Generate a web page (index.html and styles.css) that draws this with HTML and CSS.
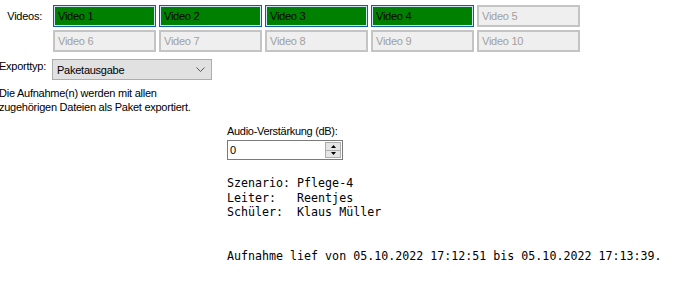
FILE: index.html
```html
<!DOCTYPE html>
<html lang="de">
<head>
    <meta charset="UTF-8">
    <title>Export</title>
    <link rel="stylesheet" href="styles.css">
</head>
<body>

<!-- Video selection -->
<div class="video-row">
    <div class="label videos-label">Videos:</div>
    <div class="video-grid">
        <div class="video-btn selected">Video 1</div>
        <div class="video-btn selected">Video 2</div>
        <div class="video-btn selected">Video 3</div>
        <div class="video-btn selected">Video 4</div>
        <div class="video-btn">Video 5</div>
        <div class="video-btn">Video 6</div>
        <div class="video-btn">Video 7</div>
        <div class="video-btn">Video 8</div>
        <div class="video-btn">Video 9</div>
        <div class="video-btn">Video 10</div>
    </div>
</div>

<!-- Export type -->
<div class="export-row">
    <div class="label export-label">Exporttyp:</div>
    <div class="combo">
        <span>Paketausgabe</span>
        <svg class="chevron" width="9" height="5" viewBox="0 0 9 5">
            <polyline points="0.5,0.5 4.5,4.5 8.5,0.5" fill="none" stroke="#555" stroke-width="1"/>
        </svg>
    </div>
</div>

<div class="desc">
    Die Aufnahme(n) werden mit allen<br>
    zugehörigen Dateien als Paket exportiert.
</div>

<!-- Details -->
<div class="details">
    <div class="label audio-label">Audio-Verstärkung (dB):</div>
    <div class="spin">
        <span class="spin-value">0</span>
        <div class="spin-buttons">
            <div class="spin-up"><svg width="5" height="3" viewBox="0 0 5 3"><polygon points="2.5,0 5,3 0,3" fill="#000"/></svg></div>
            <div class="spin-down"><svg width="5" height="3" viewBox="0 0 5 3"><polygon points="0,0 5,0 2.5,3" fill="#000"/></svg></div>
        </div>
    </div>
<pre class="info">Szenario: Pflege-4
Leiter:   Reentjes
Schüler:  Klaus Müller


Aufnahme lief von 05.10.2022 17:12:51 bis 05.10.2022 17:13:39.</pre>
</div>

</body>
</html>
```

FILE: styles.css
```css
body {
    margin: 0;
    padding: 0;
    background-color: #ffffff;
    font-family: 'Liberation Sans', Arial, sans-serif;
    font-size: 11px;
    letter-spacing: -0.25px;
    color: #000000;
}

.label {
    line-height: 13px;
}

.video-row {
    display: flex;
    padding-top: 5px;
}

.videos-label {
    width: 42px;
    text-align: right;
    padding-top: 5px;
    margin-right: 11px;
}

.video-grid {
    display: grid;
    grid-template-columns: repeat(5, 103px);
    grid-auto-rows: 22px;
    column-gap: 3px;
    row-gap: 3px;
}

.video-btn {
    box-sizing: border-box;
    border: 2px solid #c4c4c4;
    background-color: #efefef;
    color: #a0a0a0;
    padding: 2px 0 0 3px;
    line-height: 14px;
}

.video-btn.selected {
    border: 1px solid #0a5fa8;
    box-shadow: inset 0 0 0 1px #cfe4f5;
    background-color: #008000;
    color: #000000;
    padding: 3px 0 0 4px;
}

.export-row {
    display: flex;
    margin-top: 6px;
}

.export-label {
    width: 53px;
    margin-left: -1px;
    padding-top: 2px;
}

.combo {
    box-sizing: border-box;
    width: 160px;
    height: 21px;
    margin-top: 1px;
    border: 1px solid #adadad;
    background-color: #e1e1e1;
    display: flex;
    align-items: center;
    justify-content: space-between;
    padding: 0 6px 0 4px;
}

.desc {
    margin-top: 6px;
    margin-left: -1px;
    line-height: 14px;
}

.details {
    margin-left: 227px;
    margin-top: 11px;
}

.audio-label {
    letter-spacing: -0.3px;
}

.spin {
    box-sizing: border-box;
    width: 116px;
    height: 20px;
    margin-top: 2px;
    border: 1px solid #7a7a7a;
    display: flex;
    justify-content: space-between;
    align-items: center;
    padding-left: 2px;
}

.spin-buttons {
    display: flex;
    flex-direction: column;
    height: 16px;
    margin-right: 1px;
    border: 1px solid #adadad;
    box-sizing: border-box;
}

.spin-up, .spin-down {
    width: 14px;
    height: 7px;
    background-color: #e5e5e5;
    display: flex;
    align-items: center;
    justify-content: center;
}

.spin-up {
    border-bottom: 1px solid #adadad;
}

.info {
    font-family: 'DejaVu Sans Mono', 'Liberation Mono', monospace;
    font-size: 11.65px;
    letter-spacing: 0;
    line-height: 14.5px;
    margin: 16px 0 0 0;
}
```
